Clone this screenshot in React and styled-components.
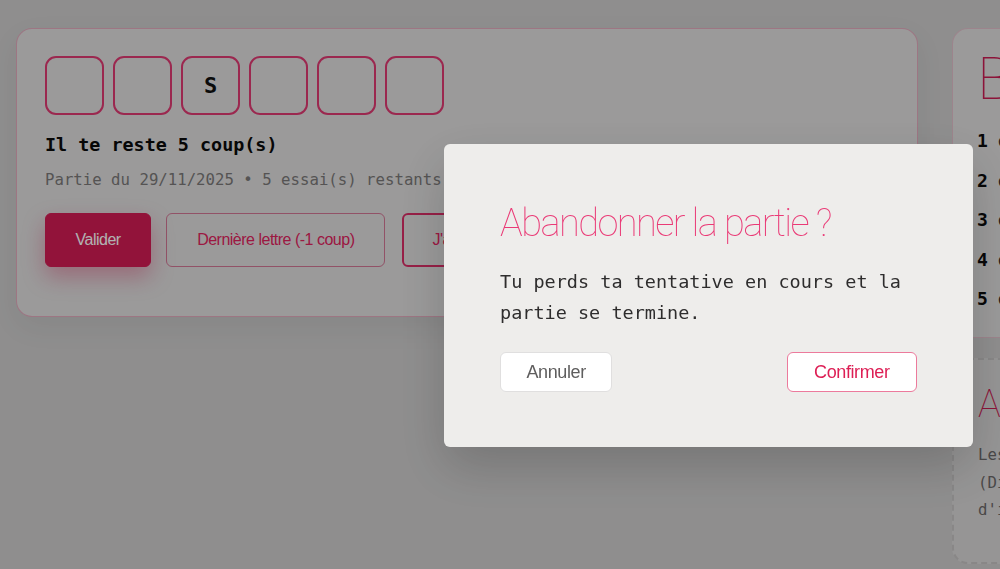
import React from "react";
import styled, { createGlobalStyle } from "styled-components";

const Global = createGlobalStyle`
  html, body { margin: 0; padding: 0; }
  body {
    background: #cdcccc;
    font-family: "DejaVu Sans Mono", monospace;
    overflow: hidden;
    width: 1000px;
    height: 569px;
  }
`;

const Page = styled.div`
  display: grid;
  grid-template-columns: 902px 340px;
  column-gap: 34px;
  padding: 28px 16px;
  align-items: start;
`;

const Card = styled.section`
  background: #dedddd;
  border: 1px solid rgba(232, 50, 111, 0.3);
  border-radius: 16px;
  padding: 27px 28px 49px;
  box-shadow: 0 10px 30px rgba(0, 0, 0, 0.06);
`;

const Tiles = styled.div`
  display: flex;
  gap: 9px;
`;

const Tile = styled.div`
  width: 59px;
  height: 59px;
  box-sizing: border-box;
  border: 2px solid #de3a72;
  border-radius: 11px;
  display: flex;
  align-items: center;
  justify-content: center;
  font-family: "DejaVu Sans Mono", monospace;
  font-weight: 700;
  font-size: 22px;
  color: #111;
`;

const Remaining = styled.div`
  margin-top: 18px;
  font-family: "DejaVu Sans Mono", monospace;
  font-weight: 700;
  font-size: 18.4px;
  line-height: 24px;
  color: #0b0b0b;
`;

const Meta = styled.div`
  margin-top: 11px;
  font-family: "DejaVu Sans Mono", monospace;
  font-size: 15.7px;
  line-height: 24px;
  color: #7a7878;
`;

const Actions = styled.div`
  margin-top: 21px;
  display: flex;
  gap: 15px;
`;

const ActionButton = styled.button`
  height: 54px;
  box-sizing: border-box;
  padding: 0 ${(p) => (p.$pad ? p.$pad : 28)}px;
  margin-left: ${(p) => (p.$shift ? p.$shift : 0)}px;
  border-radius: 6px;
  font-family: "Liberation Sans", Arial, sans-serif;
  font-size: 16px;
  letter-spacing: -0.5px;
  cursor: pointer;
  background: ${(p) => (p.$primary ? "#d11c54" : "transparent")};
  color: ${(p) => (p.$primary ? "#ffffff" : "#e0245e")};
  border: ${(p) =>
    p.$primary
      ? "1px solid #d11c54"
      : p.$strong
      ? "2px solid #d82e66"
      : "1px solid rgba(200, 50, 100, 0.6)"};
  box-shadow: ${(p) => (p.$primary ? "0 10px 22px rgba(209, 28, 84, 0.35)" : "none")};
`;

const Side = styled.aside`
  display: flex;
  flex-direction: column;
  gap: 20px;
`;

const SideCard = styled.section`
  background: #dedddd;
  border: 1px solid rgba(232, 50, 111, 0.18);
  border-radius: 16px;
  padding: 14px 24px 18px;
`;

const DashedCard = styled.section`
  background: #d7d6d6;
  border: 2px dashed #c4c2c2;
  border-radius: 16px;
  padding: 22px 24px 20px;
  height: 206px;
  box-sizing: border-box;
`;

const BigTitle = styled.h2`
  margin: 0;
  font-family: Roboto, "Liberation Sans", sans-serif;
  font-weight: 100;
  font-size: ${(p) => p.$size}px;
  line-height: 1.2;
  color: #c91c52;
  letter-spacing: -1px;
  white-space: nowrap;
`;

const Ranking = styled.ol`
  list-style: none;
  margin: 6px 0 0;
  padding: 0;
`;

const RankRow = styled.li`
  display: flex;
  gap: 10px;
  font-family: "DejaVu Sans Mono", monospace;
  font-size: 18px;
  line-height: 39.5px;
  color: #333;
  white-space: nowrap;
`;

const RankNum = styled.span`
  font-weight: 700;
  color: #0b0b0b;
`;

const Note = styled.p`
  margin: 14px 0 0;
  font-family: "DejaVu Sans Mono", monospace;
  font-size: 15.7px;
  line-height: 27.5px;
  color: #6a6868;
  white-space: nowrap;
`;

const Overlay = styled.div`
  position: fixed;
  inset: 0;
  background: rgba(0, 0, 0, 0.3);
  backdrop-filter: blur(0.6px);
  display: flex;
  align-items: flex-start;
  justify-content: flex-start;
  padding: 144px 0 0 444px;
`;

const Dialog = styled.div`
  width: 529px;
  height: 303px;
  box-sizing: border-box;
  background: #eeedeb;
  border-radius: 6px;
  padding: 58px 56px 56px;
  box-shadow: 0 20px 50px rgba(0, 0, 0, 0.18);
  display: flex;
  flex-direction: column;
`;

const DialogTitle = styled.h2`
  margin: 0;
  font-family: Roboto, "Liberation Sans", sans-serif;
  font-weight: 100;
  font-size: 38px;
  line-height: 43px;
  letter-spacing: -1.55px;
  color: #ea3a76;
  white-space: nowrap;
`;

const DialogText = styled.p`
  margin: 21px 0 0;
  font-family: "DejaVu Sans Mono", monospace;
  font-size: 18.5px;
  line-height: 31px;
  color: #2e2d2d;
`;

const DialogActions = styled.div`
  margin-top: 24px;
  display: flex;
  justify-content: space-between;
`;

const DialogButton = styled.button`
  height: 40px;
  box-sizing: border-box;
  padding: 0 ${(p) => p.$pad}px;
  background: #ffffff;
  border-radius: 6px;
  font-family: "Liberation Sans", Arial, sans-serif;
  font-size: 18px;
  letter-spacing: -0.4px;
  cursor: pointer;
  color: ${(p) => (p.$danger ? "#dd1f55" : "#5f5e5e")};
  border: 1px solid ${(p) => (p.$danger ? "#ec7a9c" : "#e0dfdf")};
`;

export default function App() {
  const letters = ["", "", "S", "", "", ""];
  return (
    <>
      <Global />
      <Page>
        <Card>
          <Tiles>
            {letters.map((l, i) => (
              <Tile key={i}>{l}</Tile>
            ))}
          </Tiles>
          <Remaining>Il te reste 5 coup(s)</Remaining>
          <Meta>Partie du 29/11/2025 • 5 essai(s) restants</Meta>
          <Actions>
            <ActionButton $primary $pad={29.5}>Valider</ActionButton>
            <ActionButton $pad={30}>Dernière lettre (-1 coup)</ActionButton>
            <ActionButton $strong $pad={28} $shift={2}>J'abandonne</ActionButton>
          </Actions>
        </Card>
        <Side>
          <SideCard>
            <BigTitle $size={60}>Bravo</BigTitle>
            <Ranking>
              <RankRow><RankNum>1</RankNum>essai</RankRow>
              <RankRow><RankNum>2</RankNum>essais</RankRow>
              <RankRow><RankNum>3</RankNum>essais</RankRow>
              <RankRow><RankNum>4</RankNum>essais</RankRow>
              <RankRow><RankNum>5</RankNum>essais</RankRow>
            </Ranking>
          </SideCard>
          <DashedCard>
            <BigTitle $size={38}>Astuce</BigTitle>
            <Note>
              Les mots viennent du
              <br />
              (Dictionnaire) et changent
              <br />
              d'ici demain.
            </Note>
          </DashedCard>
        </Side>
      </Page>
      <Overlay>
        <Dialog role="dialog" aria-modal="true">
          <DialogTitle>Abandonner la partie ?</DialogTitle>
          <DialogText>
            Tu perds ta tentative en cours et la partie se termine.
          </DialogText>
          <DialogActions>
            <DialogButton $pad={25.5}>Annuler</DialogButton>
            <DialogButton $danger $pad={26.5}>Confirmer</DialogButton>
          </DialogActions>
        </Dialog>
      </Overlay>
    </>
  );
}
